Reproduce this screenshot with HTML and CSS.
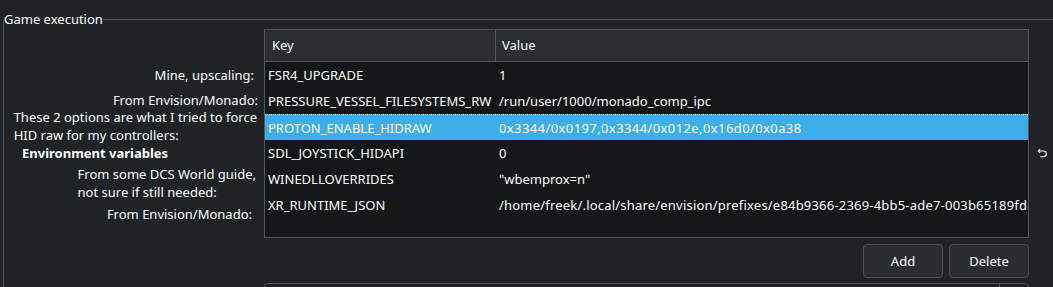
FILE: index.html
```html
<!DOCTYPE html>
<html lang="en">
<head>
    <meta charset="UTF-8">
    <title>Game execution</title>
    <link rel="stylesheet" href="styles.css">
</head>
<body>

<fieldset class="group">
    <legend>Game execution</legend>

    <div class="form-row">
        <div class="labels">
            <div class="label label-upscale">Mine, upscaling:</div>
            <div class="label label-monado">From Envision/Monado:</div>
            <div class="label label-multi label-hidraw">These 2 options are what I tried to force<br>HID raw for my controllers:</div>
            <div class="label label-bold">Environment variables</div>
            <div class="label label-multi label-dcs">From some DCS World guide,<br>not sure if still needed:</div>
            <div class="label label-xr">From Envision/Monado:</div>
        </div>

        <div class="field">
            <div class="table">
                <div class="table-head">
                    <div class="head-key">Key</div>
                    <div class="head-value">Value</div>
                </div>
                <div class="table-body">
                    <div class="row">
                        <div class="cell-key">FSR4_UPGRADE</div>
                        <div class="cell-value">1</div>
                    </div>
                    <div class="row">
                        <div class="cell-key">PRESSURE_VESSEL_FILESYSTEMS_RW</div>
                        <div class="cell-value">/run/user/1000/monado_comp_ipc</div>
                    </div>
                    <div class="row selected">
                        <div class="cell-key">PROTON_ENABLE_HIDRAW</div>
                        <div class="cell-value numeric">0x3344/0x0197,0x3344/0x012e,0x16d0/0x0a38</div>
                    </div>
                    <div class="row">
                        <div class="cell-key">SDL_JOYSTICK_HIDAPI</div>
                        <div class="cell-value">0</div>
                    </div>
                    <div class="row">
                        <div class="cell-key">WINEDLLOVERRIDES</div>
                        <div class="cell-value">"wbemprox=n"</div>
                    </div>
                    <div class="row">
                        <div class="cell-key">XR_RUNTIME_JSON</div>
                        <div class="cell-value path">/home/freek/.local/share/envision/prefixes/e84b9366-2369-4bb5-ade7-003b65189fd8/share/openxr/1/openxr_monado-dev.json</div>
                    </div>
                </div>
            </div>

            <div class="buttons">
                <button class="btn">Add</button>
                <button class="btn">Delete</button>
            </div>
        </div>

        <div class="reset">
            <svg width="11" height="11" viewBox="0 0 12 12" fill="none" stroke="#fcfcfc" stroke-width="1.2">
                <path d="M3.4 1.2 L1.4 3.2 L3.4 5.2"/>
                <path d="M1.6 3.2 H7 A3.2 3.2 0 0 1 7 9.6 H3.5"/>
            </svg>
        </div>
    </div>

    <div class="next-row">
        <div class="next-field">
            <div class="next-arrow"></div>
        </div>
    </div>
</fieldset>

</body>
</html>
```

FILE: styles.css
```css
html, body {
    margin: 0;
    padding: 0;
    height: 287px;
    overflow: hidden;
}
body {
    background-color: #202326;
    color: #fcfcfc;
    font-family: "Noto Sans", sans-serif;
    font-size: 13px;
}
.group {
    margin: 10px 0 0 3px;
    padding: 0;
    border: none;
    border-top: 1px solid #53565a;
    border-left: 1px solid #53565a;
    min-width: 0;
}
.group legend {
    padding: 0;
    line-height: 19px;
    margin-left: 0;
}
.form-row {
    display: flex;
    align-items: center;
    margin-top: 0;
}
.labels {
    width: 254px;
    margin-right: 6px;
    align-self: stretch;
    display: flex;
    flex-direction: column;
    align-items: flex-end;
    line-height: 18px;
}
.label {
    white-space: nowrap;
}
.label-upscale {
    margin-top: 37px;
    margin-right: 4px;
}
.label-monado {
    margin-top: 7px;
}
.label-hidraw {
    margin-top: -1px;
    margin-right: 1px;
}
.label-multi {
    text-align: left;
}
.label-bold {
    align-self: flex-start;
    margin-left: 18px;
    font-weight: bold;
}
.label-dcs {
    margin-top: 3px;
    margin-right: 2px;
}
.label-xr {
    margin-top: 4px;
    margin-right: 6px;
}
.field {
    width: 765px;
}
.table {
    border: 1px solid #53565a;
    background-color: #141618;
    height: 207px;
    overflow: hidden;
}
.table-head {
    display: flex;
    height: 31px;
    background-color: #2a2e32;
    border-bottom: 1px solid #53565a;
}
.head-key {
    width: 223px;
    padding-left: 7px;
    border-right: 1px solid #53565a;
    line-height: 31px;
}
.head-value {
    padding-left: 6px;
    line-height: 31px;
}
.row {
    display: flex;
    align-items: center;
    height: 26px;
    box-sizing: border-box;
    white-space: nowrap;
}
.row.selected {
    background-color: #3daee9;
    border-top: 1px dotted #d6eefa;
}
.cell-key {
    width: 228px;
    padding-left: 3px;
    flex: none;
}
.cell-value {
    padding-left: 3px;
}
.cell-value.numeric {
    letter-spacing: 0.4px;
}
.cell-value.path {
    letter-spacing: 0.2px;
}
.buttons {
    display: flex;
    justify-content: flex-end;
    gap: 6px;
    margin-top: 6px;
}
.btn {
    width: 80px;
    height: 34px;
    background-color: #292c30;
    border: 1px solid #4b4e52;
    border-radius: 4px;
    color: #fcfcfc;
    font-family: "Noto Sans", sans-serif;
    font-size: 13px;
    padding: 0;
}
.reset {
    flex: 1;
    display: flex;
    justify-content: flex-end;
    padding-right: 5px;
}
.reset svg {
    display: block;
}
.next-row {
    padding-left: 260px;
    margin-top: 5px;
}
.next-field {
    width: 763px;
    height: 30px;
    border: 1px solid #53565a;
    border-radius: 4px;
    background-color: #1c1e21;
    display: flex;
    justify-content: flex-end;
}
.next-arrow {
    width: 28px;
    border-left: 1px solid #53565a;
}
```
